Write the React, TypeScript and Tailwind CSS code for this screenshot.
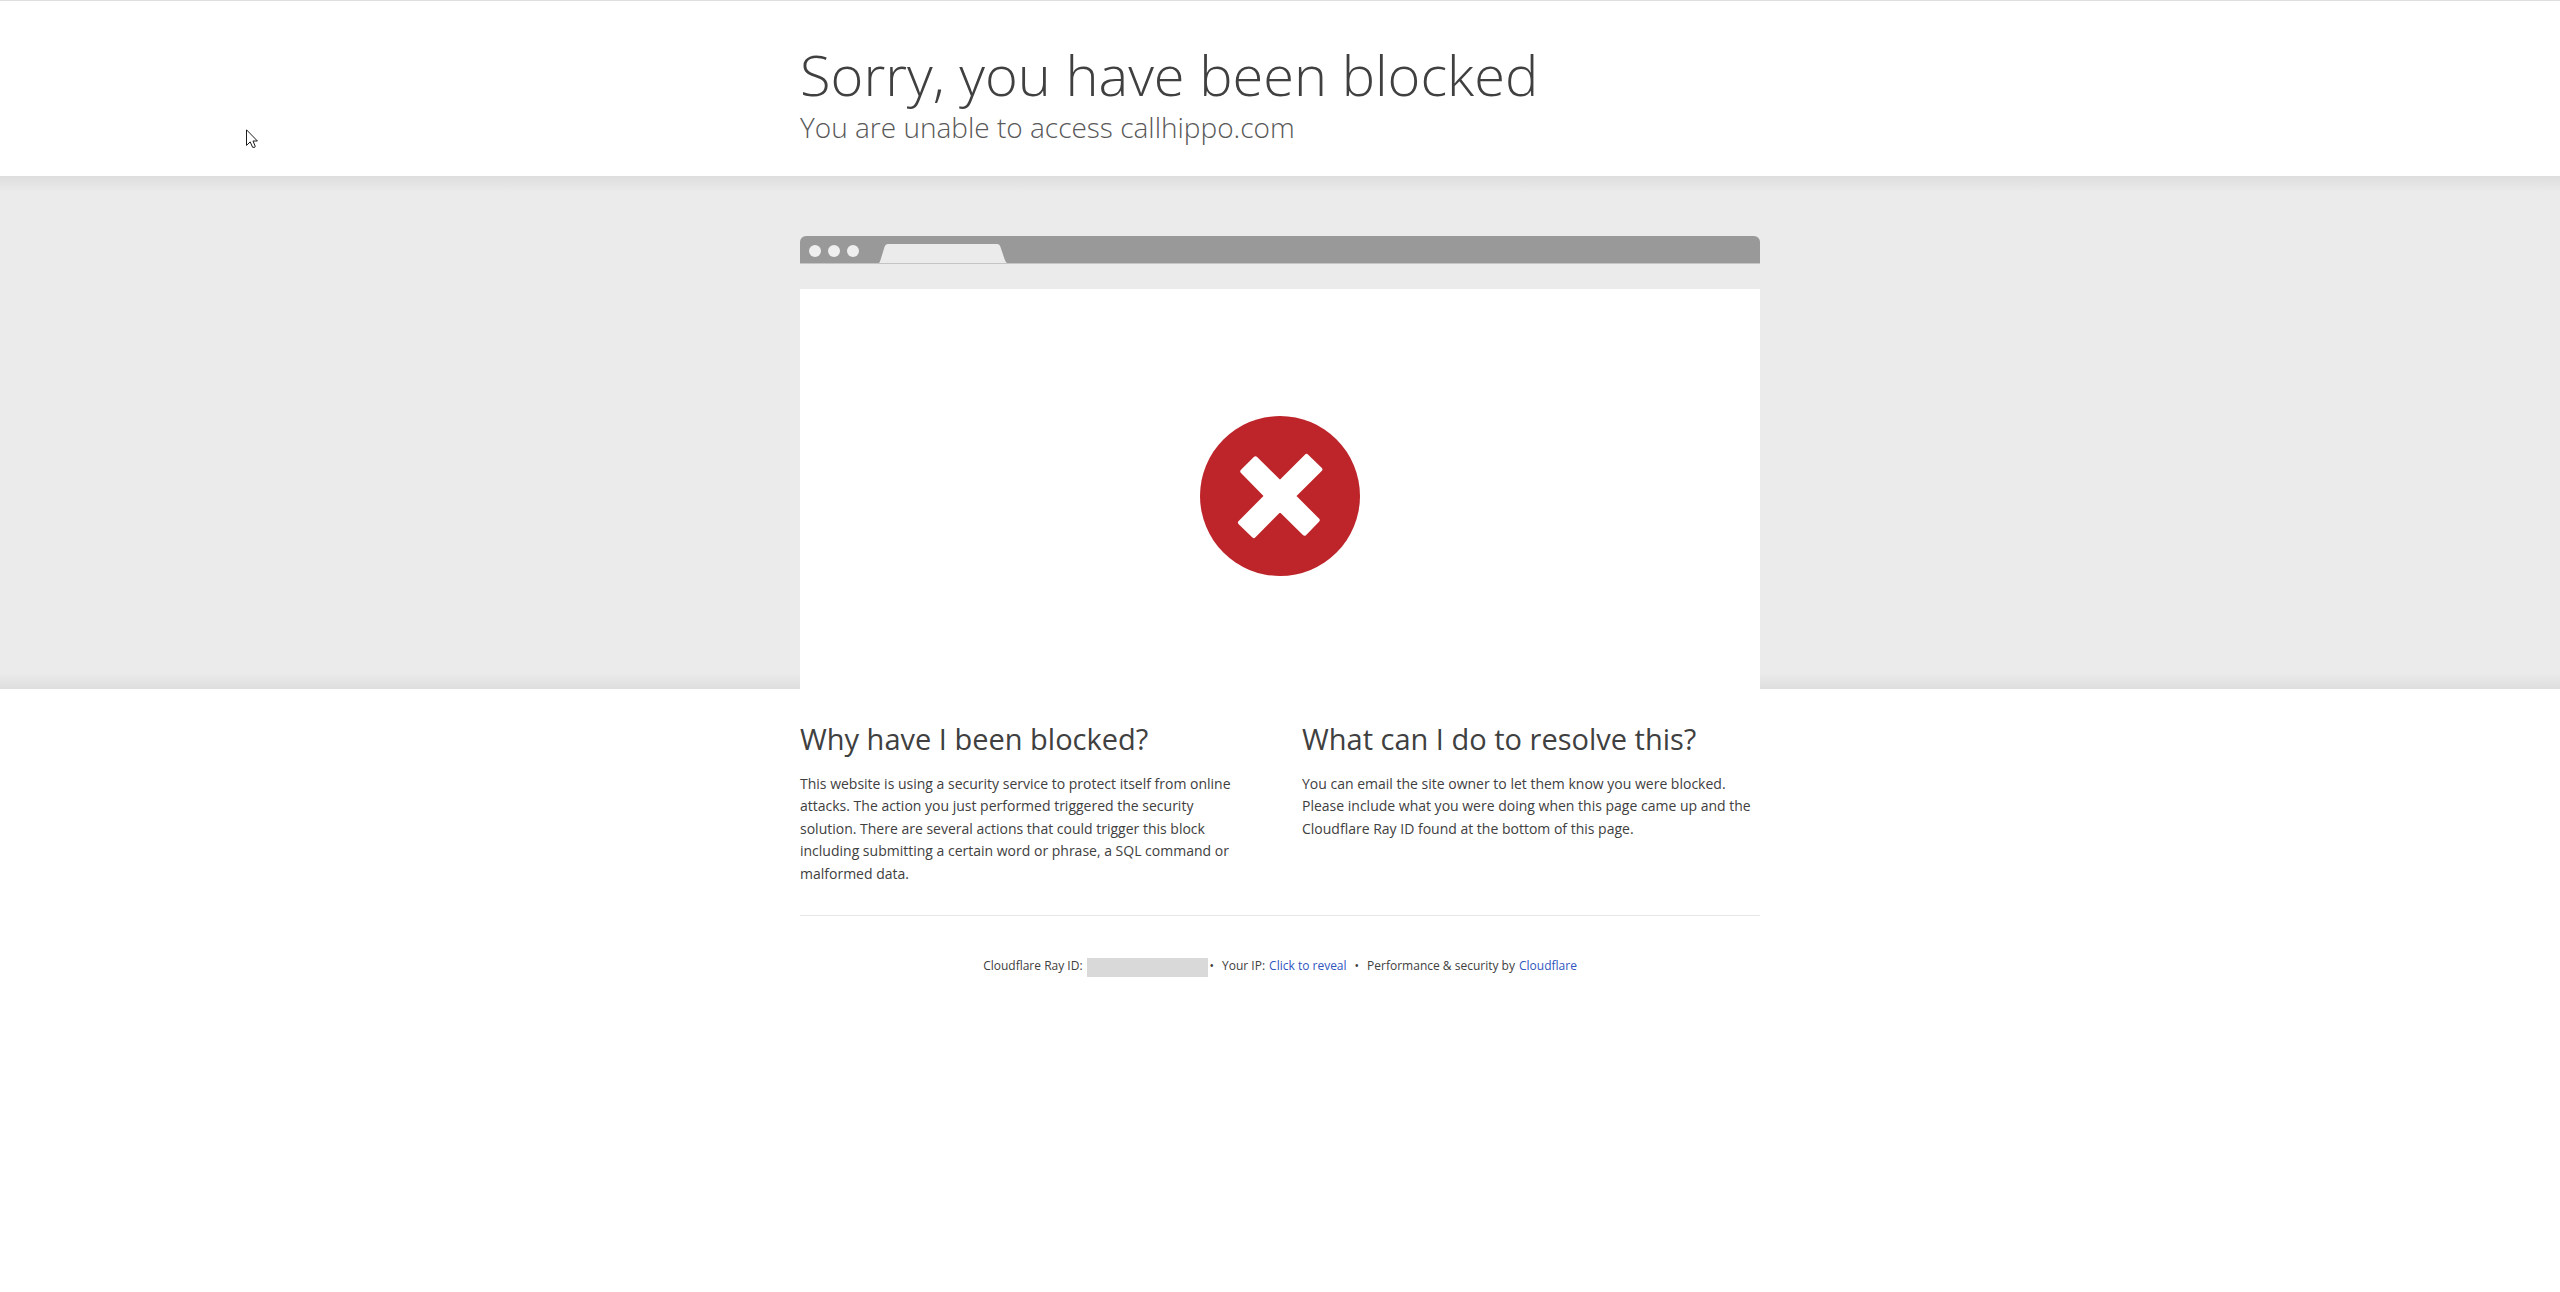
function BlockedIcon() {
  return (
    <svg viewBox="120 78 476 476" className="size-40" role="img" aria-label="Blocked">
      <circle cx="358" cy="316" r="238" fill="#be252b" />
      <path
        d="M285 205 L358 277 L437 198 L477 237 L397 316 L469 388 L431 427 L358 355 L280 434 L240 395 L319 316 L247 243 Z"
        fill="#fff"
        stroke="#fff"
        strokeWidth="14"
        strokeLinejoin="round"
      />
    </svg>
  );
}

function Pointer() {
  return (
    <svg viewBox="0 0 12 19" className="pointer-events-none absolute left-[246px] top-32 h-[19px] w-3" aria-hidden="true">
      <path
        d="M.5 .8 V16.4 L4.2 12.9 L6.6 18.3 H8.8 L9.2 17.2 L7 12 H11.4 Z"
        fill="#fff"
        stroke="#1c1c1c"
        strokeWidth="1"
      />
    </svg>
  );
}

function BrowserBar() {
  return (
    <div className="flex h-7 items-end rounded-t-md border-b border-[#c4c4c4] bg-[#999]">
      <div className="flex gap-[7px] self-center pl-[9px] pt-0.5">
        <span className="size-3 rounded-full bg-[#efefef]" />
        <span className="size-3 rounded-full bg-[#efefef]" />
        <span className="size-3 rounded-full bg-[#efefef]" />
      </div>
      <svg viewBox="0 0 128 19" className="ml-5 h-[19px] w-32" aria-hidden="true">
        <path d="M0 19 C1 18 1 17 1.500 16 L5.500 3 Q6.500 0 9 0 H118 Q120.500 0 121.500 3 L125.500 15 Q126.500 18 128 19 Z" fill="#ebebeb" />
      </svg>
    </div>
  );
}

const wrap = "mx-auto w-full max-w-[960px]";

export default function App() {
  return (
    <div className="relative min-h-screen border-t border-[#dedede] bg-white font-['Open_Sans','Noto_Sans',sans-serif] text-[#404040]">
      <header className={wrap + " pb-[31px] pt-[43px]"}>
        <h1 className="text-[56px] font-light leading-[60px]">Sorry, you have been blocked</h1>
        <h2 className="mt-[5px] text-[28px] font-light leading-9 text-[#595959]">You are unable to access callhippo.com</h2>
      </header>

      <section className="bg-[#ebebeb] bg-[linear-gradient(to_bottom,#dedede,#ebebeb_16px,#ebebeb_calc(100%-16px),#dedede)] pt-[60px]">
        <div className={wrap}>
          <BrowserBar />
          <div className="mt-[25px] flex h-[400px] justify-center bg-white pt-[127px]">
            <BlockedIcon />
          </div>
        </div>
      </section>

      <main className={wrap + " grid grid-cols-2 gap-11 pt-8"}>
        <section>
          <h2 className="text-[29px] leading-9">Why have I been blocked?</h2>
          <p className="mt-4 pr-4 text-sm leading-[1.6]">
            This website is using a security service to protect itself from online attacks. The action you just performed
            triggered the security solution. There are several actions that could trigger this block including submitting a
            certain word or phrase, a SQL command or malformed data.
          </p>
        </section>
        <section>
          <h2 className="text-[29px] leading-9">What can I do to resolve this?</h2>
          <p className="mt-4 text-sm leading-[1.6]">
            You can email the site owner to let them know you were blocked. Please include what you were doing when this page
            came up and the Cloudflare Ray ID found at the bottom of this page.
          </p>
        </section>
      </main>

      <footer className={wrap + " mt-[30px] flex justify-center border-t border-[#e6e6e6] pt-10 text-xs leading-5"}>
        <span>Cloudflare Ray ID:</span>
        <span className="ml-1 mt-0.5 h-[19px] w-[121px] bg-[#d9d9d9]" />
        <span className="ml-0.5">•</span>
        <span className="ml-2">Your IP:</span>
        <button type="button" className="ml-1 text-[#2f55c0]">Click to reveal</button>
        <span className="ml-2">•</span>
        <span className="ml-2">Performance &amp; security by</span>
        <a href="#cloudflare" className="ml-1 text-[#2f55c0]">Cloudflare</a>
      </footer>

      <Pointer />
    </div>
  );
}
